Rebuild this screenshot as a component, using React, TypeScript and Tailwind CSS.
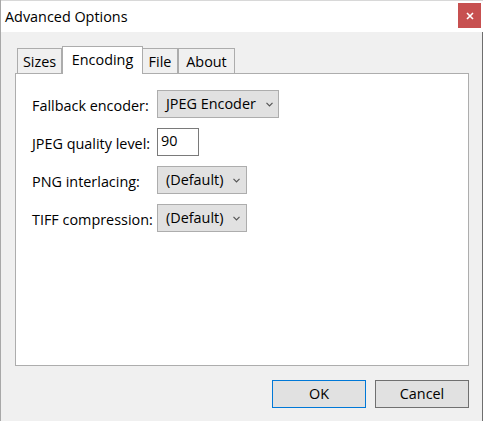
import React from "react";

const Chevron = () => (
  <svg width="7" height="5" viewBox="0 0 7 5" className="shrink-0">
    <path d="M0.5 0.8 L3.5 3.8 L6.5 0.8" fill="none" stroke="#555555" strokeWidth="1.2" />
  </svg>
);

function Dropdown({ label, width, pr }: { label: string; width: string; pr: string }) {
  return (
    <div
      className={`${width} ${pr} h-[28px] bg-[#e1e1e1] border border-[#adadad] flex items-center justify-between pl-[8px] text-[14.4px] text-black`}
    >
      <span className="leading-none pt-[1px]">{label}</span>
      <Chevron />
    </div>
  );
}

export default function App() {
  const font = { fontFamily: '"Open Sans", "Noto Sans", sans-serif' };
  return (
    <div
      className="w-[483px] h-[421px] bg-[#f0f0f0] flex flex-col border-l border-[#a8a8a8] overflow-hidden"
      style={font}
    >
      {/* title bar */}
      <div className="h-[32px] bg-white flex items-start shrink-0 border-t border-[#d8d8d8]">
        <div className="flex-1 pl-[4px] pt-[6px] text-[14.4px] text-black leading-[20px]">
          Advanced Options
        </div>
        <div className="mt-[2px] mr-[2px] w-[23px] h-[25px] bg-[#c75050] flex items-center justify-center">
          <svg width="8" height="8" viewBox="0 0 8 8">
            <path d="M1 1 L7 7 M7 1 L1 7" stroke="white" strokeWidth="1.6" />
          </svg>
        </div>
      </div>

      {/* body */}
      <div className="flex-1 flex flex-col border-r border-[#6e6e6e] pl-[14px] pr-[13px] pt-[14px]">
        {/* tabs */}
        <div className="flex items-end h-[28px] pl-[2px] -mb-[1px] relative z-10 text-[14.4px] text-black">
          <div className="h-[25px] mb-[1px] w-[45px] border border-b-0 border-[#acacac] bg-[#f0f0f0] flex items-center justify-center leading-none pt-[2px]">
            Sizes
          </div>
          <div className="h-[28px] w-[81px] border border-b-0 border-[#acacac] bg-white flex items-center justify-center leading-none">
            Encoding
          </div>
          <div className="h-[25px] mb-[1px] w-[35px] border border-b-0 border-l-0 border-[#acacac] bg-[#f0f0f0] flex items-center justify-center leading-none pt-[2px]">
            File
          </div>
          <div className="h-[25px] mb-[1px] w-[57px] border border-b-0 border-[#acacac] bg-[#f0f0f0] flex items-center justify-center leading-none pt-[2px]">
            About
          </div>
        </div>

        {/* panel */}
        <div className="h-[293px] w-[454px] bg-white border border-[#adadad] pt-[16px] pl-[16px] flex flex-col gap-[10px] text-[14.4px] text-black">
          <div className="flex items-center h-[28px]">
            <div className="w-[125px] pt-[4px] leading-none">Fallback encoder:</div>
            <Dropdown label="JPEG Encoder" width="w-[122px]" pr="pr-[5px]" />
          </div>
          <div className="flex items-center h-[28px]">
            <div className="w-[125px] pt-[4px] leading-none">JPEG quality level:</div>
            <div className="w-[42px] h-[28px] bg-white border border-[#7a7a7a] pl-[3px] pt-[5px] leading-none">
              90
            </div>
          </div>
          <div className="flex items-center h-[28px]">
            <div className="w-[125px] pt-[4px] leading-none">PNG interlacing:</div>
            <Dropdown label="(Default)" width="w-[90px]" pr="pr-[6px]" />
          </div>
          <div className="flex items-center h-[28px]">
            <div className="w-[125px] pt-[4px] leading-none">TIFF compression:</div>
            <Dropdown label="(Default)" width="w-[90px]" pr="pr-[6px]" />
          </div>
        </div>

        {/* buttons */}
        <div className="flex justify-end gap-[9px] mt-[14px] text-[14.4px] text-black">
          <button className="w-[94px] h-[28px] bg-[#e1e1e1] border border-[#0078d7] leading-none">
            OK
          </button>
          <button className="w-[94px] h-[28px] bg-[#e1e1e1] border border-[#707070] leading-none">
            Cancel
          </button>
        </div>
      </div>
    </div>
  );
}
